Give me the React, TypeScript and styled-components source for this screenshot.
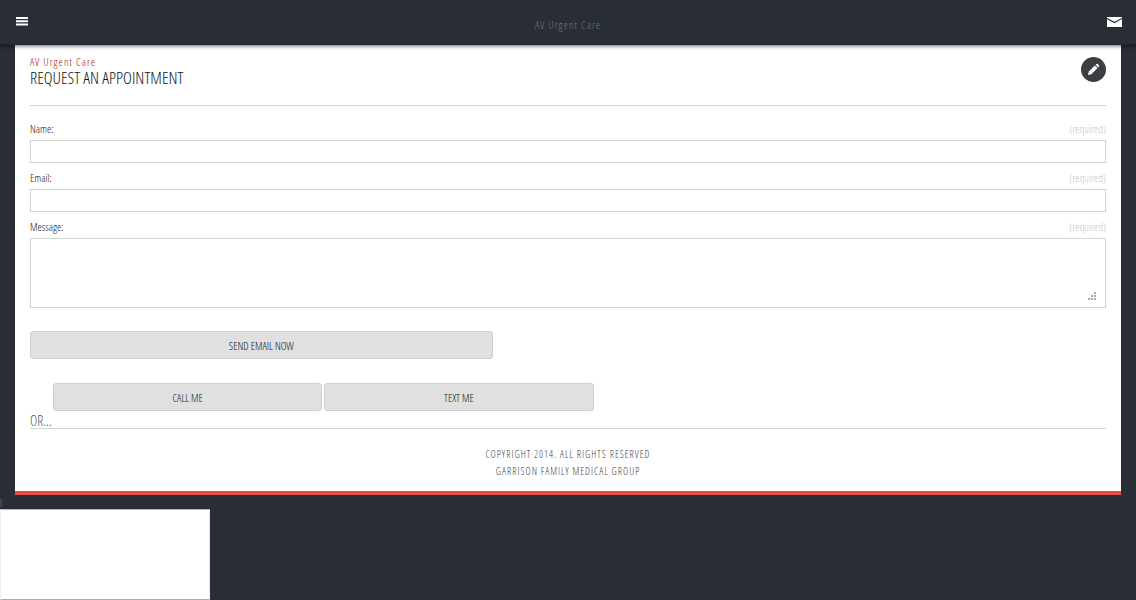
import React from "react";
import styled, { createGlobalStyle } from "styled-components";

const GlobalStyle = createGlobalStyle`
  *, *::before, *::after { box-sizing: border-box; }
  body {
    margin: 0;
    background: #292d35;
    color: #111315;
    font-family: "Open Sans Condensed Light", "Open Sans Condensed", "Roboto Condensed", Roboto, sans-serif;
    font-size: 11px;
    font-weight: 300;
    line-height: 16px;
  }
  h1, h2, p { margin: 0; font-weight: 300; }
  button, input, textarea { font: inherit; color: inherit; }
`;

const TopBar = styled.header`
  position: relative;
  display: grid;
  grid-template-columns: 1fr auto 1fr;
  align-items: center;
  height: 45px;
  padding: 0 14px;
  background: #292d35;
  border-bottom: 1px solid #1f2229;
  box-shadow: 0 1px 4px rgba(0, 0, 0, 0.6);
`;

const SiteName = styled.p`
  padding-top: 6px;
  color: #77797b;
  letter-spacing: 1px;
`;

const IconButton = styled.button<{ $end?: boolean }>`
  display: flex;
  justify-self: ${(p) => (p.$end ? "end" : "start")};
  padding: 0;
  border: 0;
  background: none;
  color: #fff;
`;

const Panel = styled.main`
  margin: 0 15px;
  padding: 9px 15px 11px;
  background: #fff;
  border-bottom: 4px solid #e54e48;
`;

const Heading = styled.div`
  display: flex;
  justify-content: space-between;
  align-items: flex-start;
  height: 52px;
  border-bottom: 1px solid #d3d3d3;
`;

const Eyebrow = styled.p`
  color: #b80f0a;
  letter-spacing: 1px;
`;

const Title = styled.h1`
  font-size: 17px;
  line-height: 16px;
`;

const EditButton = styled.button`
  display: flex;
  align-items: center;
  justify-content: center;
  width: 25px;
  height: 25px;
  margin-top: 3px;
  padding: 0;
  border: 0;
  border-radius: 50%;
  background: #3a3f43;
  color: #fff;
`;

const Form = styled.form`
  display: grid;
  gap: 7px;
  padding-top: 15px;
`;

const Field = styled.div`
  display: grid;
  gap: 3px;
`;

const FieldHead = styled.div`
  display: flex;
  justify-content: space-between;
`;

const Required = styled.span`
  color: #c4c4c4;
`;

const TextInput = styled.input`
  width: 100%;
  height: 23px;
  padding: 2px 8px;
  border: 1px solid #d3d3d3;
  background: #fff;
`;

const MessageBox = styled.div`
  position: relative;
  display: flex;
`;

const TextArea = styled.textarea`
  width: 100%;
  height: 70px;
  padding: 8px;
  border: 1px solid #d3d3d3;
  background: #fff;
  resize: none;
`;

const Grip = styled.svg`
  position: absolute;
  right: 10px;
  bottom: 8px;
  pointer-events: none;
`;

const ActionButton = styled.button<{ $width: string }>`
  width: ${(p) => p.$width};
  height: 28px;
  padding: 2px 0 0;
  border: 1px solid #cfcfcf;
  border-radius: 3px;
  background: #e0e0e0;
  text-transform: uppercase;
`;

const SendRow = styled.div`
  padding-top: 16px;
`;

const ContactRow = styled.div`
  display: flex;
  gap: 2px;
  padding: 24px 0 0 23px;
`;

const Alternative = styled.h2`
  height: 18px;
  padding-top: 2px;
  border-bottom: 1px solid #d3d3d3;
  color: #4c4e50;
  font-size: 14px;
  line-height: 16px;
`;

const Copyright = styled.footer`
  padding-top: 17px;
  color: #3c3e40;
  font-size: 10px;
  line-height: 17px;
  letter-spacing: 1px;
  text-align: center;
  text-transform: uppercase;
`;

const Counter = styled.p`
  height: 14px;
  color: #8c8e90;
`;

const Frame = styled.section`
  width: 210px;
  height: 91px;
  background: #fff;
  border: 1px solid #eee;
  border-top-color: #b9b9b9;
  border-bottom-color: #aaa;
`;

function MenuIcon() {
  return (
    <svg width="16" height="12" viewBox="0 0 16 12" fill="currentColor" aria-hidden="true">
      <path d="M2 1h12v2H2zM2 4.3h12v2H2zM2 7.6h12v2H2z" />
    </svg>
  );
}

function MailIcon() {
  return (
    <svg width="16" height="12" viewBox="0 0 16 12" aria-hidden="true">
      <path d="M1 1h15v10H1z" fill="currentColor" />
      <path d="M1 2.4 8.5 6.6 16 2.4" fill="none" stroke="#292d35" strokeWidth="1.2" />
    </svg>
  );
}

function PencilIcon() {
  return (
    <svg width="13" height="13" viewBox="0 0 13 13" fill="currentColor" aria-hidden="true">
      <path d="M1 12 1.8 8.6 7.9 2.5 10.5 5.1 4.4 11.2zM8.6 1.8 9.4 1Q10 .5 10.7 1L12 2.3Q12.5 3 12 3.6L11.2 4.4z" />
    </svg>
  );
}

const gripDots = [[6, 0], [6, 3], [3, 3], [6, 6], [3, 6], [0, 6]];

function TextField({ id, label }: { id: string; label: string }) {
  return (
    <Field>
      <FieldHead>
        <label htmlFor={id}>{label}</label>
        <Required>(required)</Required>
      </FieldHead>
      {id === "message" ? (
        <MessageBox>
          <TextArea id={id} required />
          <Grip width="8" height="8" fill="#aaa" aria-hidden="true">
            {gripDots.map(([x, y]) => (
              <rect key={`${x}-${y}`} x={x} y={y} width="2" height="2" />
            ))}
          </Grip>
        </MessageBox>
      ) : (
        <TextInput id={id} type={id === "email" ? "email" : "text"} required />
      )}
    </Field>
  );
}

export default function App() {
  return (
    <>
      <GlobalStyle />
      <TopBar>
        <IconButton type="button" aria-label="Menu"><MenuIcon /></IconButton>
        <SiteName>AV Urgent Care</SiteName>
        <IconButton type="button" aria-label="Email" $end><MailIcon /></IconButton>
      </TopBar>
      <Panel>
        <Heading>
          <div>
            <Eyebrow>AV Urgent Care</Eyebrow>
            <Title>REQUEST AN APPOINTMENT</Title>
          </div>
          <EditButton type="button" aria-label="Edit"><PencilIcon /></EditButton>
        </Heading>
        <Form>
          <TextField id="name" label="Name:" />
          <TextField id="email" label="Email:" />
          <TextField id="message" label="Message:" />
          <SendRow>
            <ActionButton type="submit" $width="43%">Send Email Now</ActionButton>
          </SendRow>
        </Form>
        <ContactRow>
          <ActionButton type="button" $width="calc(25% + 6px)">Call Me</ActionButton>
          <ActionButton type="button" $width="calc(25% + 6px)">Text Me</ActionButton>
        </ContactRow>
        <Alternative>OR...</Alternative>
        <Copyright>
          <p>Copyright 2014. All Rights Reserved</p>
          <p>Garrison Family Medical Group</p>
        </Copyright>
      </Panel>
      <Counter>l</Counter>
      <Frame />
    </>
  );
}
